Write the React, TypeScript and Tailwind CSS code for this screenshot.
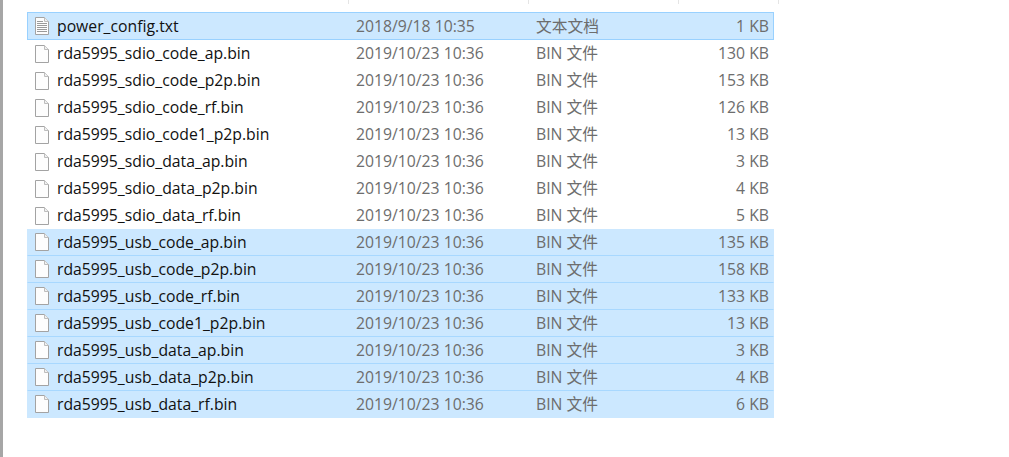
import React from "react";

type Row = { name: string; date: string; type: string; size: string; selected: boolean; text?: boolean };

const rows: Row[] = [
  { name: "power_config.txt", date: "2018/9/18 10:35", type: "文本文档", size: "1 KB", selected: true, text: true },
  { name: "rda5995_sdio_code_ap.bin", date: "2019/10/23 10:36", type: "BIN 文件", size: "130 KB", selected: false },
  { name: "rda5995_sdio_code_p2p.bin", date: "2019/10/23 10:36", type: "BIN 文件", size: "153 KB", selected: false },
  { name: "rda5995_sdio_code_rf.bin", date: "2019/10/23 10:36", type: "BIN 文件", size: "126 KB", selected: false },
  { name: "rda5995_sdio_code1_p2p.bin", date: "2019/10/23 10:36", type: "BIN 文件", size: "13 KB", selected: false },
  { name: "rda5995_sdio_data_ap.bin", date: "2019/10/23 10:36", type: "BIN 文件", size: "3 KB", selected: false },
  { name: "rda5995_sdio_data_p2p.bin", date: "2019/10/23 10:36", type: "BIN 文件", size: "4 KB", selected: false },
  { name: "rda5995_sdio_data_rf.bin", date: "2019/10/23 10:36", type: "BIN 文件", size: "5 KB", selected: false },
  { name: "rda5995_usb_code_ap.bin", date: "2019/10/23 10:36", type: "BIN 文件", size: "135 KB", selected: true },
  { name: "rda5995_usb_code_p2p.bin", date: "2019/10/23 10:36", type: "BIN 文件", size: "158 KB", selected: true },
  { name: "rda5995_usb_code_rf.bin", date: "2019/10/23 10:36", type: "BIN 文件", size: "133 KB", selected: true },
  { name: "rda5995_usb_code1_p2p.bin", date: "2019/10/23 10:36", type: "BIN 文件", size: "13 KB", selected: true },
  { name: "rda5995_usb_data_ap.bin", date: "2019/10/23 10:36", type: "BIN 文件", size: "3 KB", selected: true },
  { name: "rda5995_usb_data_p2p.bin", date: "2019/10/23 10:36", type: "BIN 文件", size: "4 KB", selected: true },
  { name: "rda5995_usb_data_rf.bin", date: "2019/10/23 10:36", type: "BIN 文件", size: "6 KB", selected: true },
];

function FileIcon({ text }: { text?: boolean }) {
  return (
    <svg width="16" height="20" viewBox="0 0 16 20" className="shrink-0">
      <path d="M1.5 1.5H10.5L14.5 5.5V18.5H1.5Z" fill="#fdfdfd" stroke="#a3a3a3" />
      <path d="M10.5 1.5V5.5H14.5" fill="#f0f0f0" stroke="#bdbdbd" />
      {text && (
        <g stroke="#9a9a9a">
          <path d="M3 5.5H9M3 7.5H13M3 9.5H13M3 11.5H13M3 13.5H13M3 15.5H13" />
        </g>
      )}
    </svg>
  );
}

export default function App() {
  return (
    <div className="flex h-[457px] w-full overflow-hidden bg-white font-['Open_Sans','Noto_Sans_CJK_SC',sans-serif] text-[15.75px]">
      <div className="w-[3px] shrink-0 bg-[#a6a6a6]" />
      <div className="flex w-[777px] shrink-0 flex-col">
        <div className="grid h-[4px] shrink-0 grid-cols-[346px_180px_150px_100px]">
          <div className="border-r border-[#e5e5e5]" />
          <div className="border-r border-[#e5e5e5]" />
          <div className="border-r border-[#e5e5e5]" />
          <div className="border-r border-[#e5e5e5]" />
        </div>
        <div className="ml-6 mt-[8px] flex w-[747px] flex-col">
          {rows.map((r, i) => {
            const first = i === 0;
            const last = i === rows.length - 1;
            const cls = first
              ? "h-[28px] border border-[#99d1ff] bg-[#cce8ff]"
              : r.selected
                ? last
                  ? "h-[27px] border-x border-b border-[#cce8ff] bg-[#cce8ff]"
                  : "h-[27px] border-x border-b border-x-[#cce8ff] border-b-[#a8d8ff] bg-[#cce8ff]"
                : "h-[27px] border border-transparent";
            const nudge = r.selected ? "pt-[2px]" : "";
            return (
              <div key={r.name} className={`flex items-center ${cls}`}>
                <div className="ml-[6px] flex w-[322px] shrink-0 items-center gap-[7px]">
                  <FileIcon text={r.text} />
                  <span className={`whitespace-nowrap text-[#111111] ${nudge}`}>{r.name}</span>
                </div>
                <span className={`w-[180px] shrink-0 whitespace-nowrap text-[#6d6d6d] ${nudge}`}>{r.date}</span>
                <span className={`w-[150px] shrink-0 whitespace-nowrap text-[#6d6d6d] ${nudge}`}>{r.type}</span>
                <span className={`w-[83px] shrink-0 whitespace-nowrap text-right text-[#6d6d6d] ${nudge}`}>{r.size}</span>
              </div>
            );
          })}
        </div>
      </div>
    </div>
  );
}
